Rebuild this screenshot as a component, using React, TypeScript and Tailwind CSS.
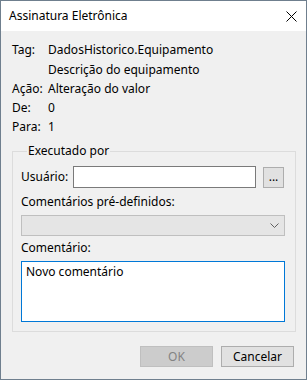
export default function App() {
  const font = { fontFamily: '"Noto Sans", "Open Sans", sans-serif' };

  return (
    <div
      className="w-[307px] h-[380px] border border-[#6f7f8e] bg-[#f0f0f0] flex flex-col text-[12px] leading-[16px] text-black overflow-hidden"
      style={font}
    >
      {/* Title bar */}
      <div className="h-[30px] shrink-0 bg-white flex items-center justify-between pl-[8px] pr-[9px]">
        <span>Assinatura Eletrônica</span>
        <svg width="11" height="11" viewBox="0 0 11 11" className="mt-[0px]">
          <path d="M0.5 0.5 L10.5 10.5 M10.5 0.5 L0.5 10.5" stroke="#000" strokeWidth="1" />
        </svg>
      </div>

      {/* Info rows */}
      <div className="pt-[8px] pl-[11px] flex flex-col">
        <div className="h-[21px] flex items-center">
          <span className="w-[36px]">Tag:</span>
          <span>DadosHistorico.Equipamento</span>
        </div>
        <div className="h-[19px] flex items-center">
          <span className="w-[36px]" />
          <span>Descrição do equipamento</span>
        </div>
        <div className="h-[19px] flex items-center">
          <span className="w-[36px]">Ação:</span>
          <span>Alteração do valor</span>
        </div>
        <div className="h-[19px] flex items-center">
          <span className="w-[36px]">De:</span>
          <span>0</span>
        </div>
        <div className="h-[19px] flex items-center">
          <span className="w-[36px]">Para:</span>
          <span>1</span>
        </div>
      </div>

      {/* Group box */}
      <fieldset className="mt-[7px] ml-[11px] mr-[10px] border border-[#dcdcdc] pl-[8px] pr-[10px] pb-[9px]">
        <legend className="ml-[6px] px-[1px]">Executado por</legend>

        <div className="mt-[7px] flex items-center">
          <span className="w-[52px]">Usuário:</span>
          <input
            className="w-[183px] h-[22px] border border-[#7a7a7a] bg-white outline-none"
            readOnly
          />
          <button className="ml-[7px] w-[21px] h-[21px] border border-[#adadad] bg-[#e1e1e1] leading-[18px] text-center">
            ...
          </button>
        </div>

        <div className="mt-[6px]">Comentários pré-definidos:</div>
        <div className="mt-[5px] h-[21px] border border-[#bfbfbf] bg-[#e5e5e5] flex items-center justify-end pr-[5px]">
          <svg width="9" height="5" viewBox="0 0 9 5">
            <path d="M0.5 0.5 L4.5 4.5 L8.5 0.5" stroke="#606060" fill="none" strokeWidth="1" />
          </svg>
        </div>

        <div className="mt-[4px]">Comentário:</div>
        <textarea
          className="mt-[5px] block w-full h-[61px] border border-[#0078d7] bg-white pl-[4px] pt-[2px] resize-none outline-none"
          defaultValue="Novo comentário"
          readOnly
        />
      </fieldset>

      {/* Buttons */}
      <div className="mt-[14px] pr-[12px] flex justify-end gap-[8px]">
        <button className="w-[73px] h-[21px] border border-[#bfbfbf] bg-[#cccccc] text-[#838383]">
          OK
        </button>
        <button className="w-[73px] h-[21px] border border-[#adadad] bg-[#e1e1e1]">
          Cancelar
        </button>
      </div>
    </div>
  );
}
